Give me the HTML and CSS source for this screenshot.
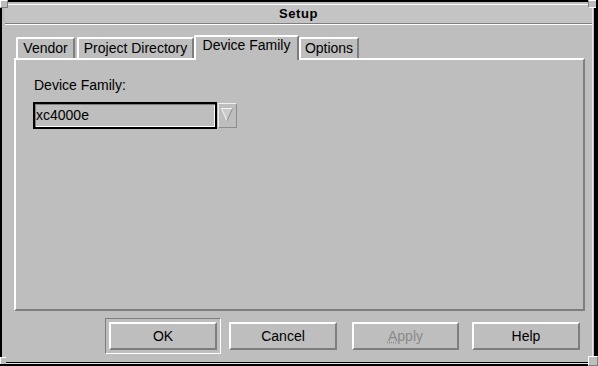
FILE: index.html
```html
<!DOCTYPE html>
<html>
<head>
    <title>Setup</title>
    <link rel="stylesheet" href="styles.css">
</head>
<body>
    <div class="window">
        <span class="corner corner-tl"></span>
        <span class="corner corner-tr"></span>
        <span class="corner corner-bl"></span>
        <span class="corner corner-br"></span>
        <div class="frame">
            <div class="titlebar">Setup</div>

            <div class="notebook">
                <div class="tabs">
                    <div class="tab tab-vendor">Vendor</div>
                    <div class="tab tab-project">Project Directory</div>
                    <div class="tab tab-family active">Device Family</div>
                    <div class="tab tab-options">Options</div>
                </div>
                <div class="panel">
                    <div class="field-label">Device Family:</div>
                    <div class="combo">
                        <div class="combo-text">xc4000e</div>
                        <div class="combo-arrow">
                            <svg width="17" height="23" viewBox="0 0 17 23">
                                <polygon points="2.5,4.5 13.5,4.5 8,17" fill="#cbcbcb"/>
                                <polyline points="13.5,4.5 2.5,4.5 8,17" fill="none" stroke="#f4f4f4" stroke-width="1"/>
                                <line x1="13.5" y1="4.5" x2="8" y2="17" stroke="#8c8c8c" stroke-width="1"/>
                            </svg>
                        </div>
                    </div>
                </div>
            </div>

            <div class="buttons">
                <div class="default-frame"><button class="btn btn-ok">OK</button></div>
                <button class="btn btn-cancel">Cancel</button>
                <button class="btn btn-apply disabled"><u>A</u>pply</button>
                <button class="btn btn-help">Help</button>
            </div>
        </div>
    </div>
</body>
</html>
```

FILE: styles.css
```css
body {
    margin: 0;
    font-family: "Liberation Sans", Arial, sans-serif;
    font-size: 14px;
    color: #000;
    background: #000;
}
.window {
    position: relative;
    width: 598px;
    height: 366px;
    box-sizing: border-box;
    border-style: solid;
    border-color: #000;
    border-width: 2px 4px 4px 2px;
    background: #bebebe;
}
/* resize handles of the window frame */
.corner {
    position: absolute;
    width: 8px;
    height: 8px;
    box-sizing: border-box;
    background: #bebebe;
}
.corner-tl {
    left: -2px;
    top: -2px;
    border-top: 1px solid #fff;
    border-left: 1px solid #fff;
    border-right: 1px solid #7e7e7e;
    border-bottom: 1px solid #7e7e7e;
}
.corner-tr {
    right: -2px;
    top: -2px;
    border-top: 1px solid #fff;
    border-left: 1px solid #7e7e7e;
    border-bottom: 1px solid #fff;
}
.corner-bl {
    left: -2px;
    bottom: -2px;
    width: 6px;
    height: 7px;
    border-left: 1px solid #fff;
    border-top: 1px solid #fff;
}
.corner-br {
    right: -4px;
    bottom: -4px;
    width: 10px;
    height: 10px;
    border-top: 1px solid #fff;
    border-left: 1px solid #fff;
    border-right: 1px solid #7e7e7e;
    border-bottom: 1px solid #7e7e7e;
}
.frame {
    height: 100%;
    box-sizing: border-box;
    margin-right: 1px;
    border-right: 1px solid #e4e4e4;
    border-bottom: 1px solid #e4e4e4;
}
.titlebar {
    margin: 2px 0 0 3px;
    height: 20px;
    box-sizing: border-box;
    border-top: 1px solid #fff;
    border-bottom: 1px solid #7e7e7e;
    box-shadow: 0 1px 0 #fff;
    background: #c4c4c4;
    line-height: 18px;
    text-align: center;
    font-size: 13px;
    font-weight: bold;
    letter-spacing: 0.6px;
}
.notebook {
    margin: 11px 0 0 12px;
    width: 571px;
}
.tabs {
    display: flex;
    align-items: flex-end;
    height: 23px;
    padding-left: 2px;
}
.tab {
    box-sizing: border-box;
    height: 21px;
    border-top: 2px solid #fff;
    border-left: 2px solid #fff;
    border-right: 2px solid #7e7e7e;
    border-top-left-radius: 2px;
    line-height: 19px;
    text-align: center;
    white-space: nowrap;
}
.tab-vendor { width: 59px; }
.tab-project { width: 117px; margin-left: 2px; }
.tab-family { width: 105px; }
.tab-options { width: 60px; }
.tab.active {
    height: 25px;
    line-height: 16px;
    margin-bottom: -2px;
    position: relative;
    z-index: 1;
    background: #bebebe;
}
.panel {
    box-sizing: border-box;
    width: 571px;
    height: 253px;
    border: 2px solid;
    border-color: #fff #7e7e7e #7e7e7e #fff;
    padding: 17px 0 0 17px;
}
.field-label {
    line-height: 16px;
    margin-left: 1px;
}
.combo {
    display: flex;
    align-items: center;
    margin-top: 9px;
}
.combo-text {
    box-sizing: border-box;
    width: 184px;
    height: 27px;
    border: 2px solid #000;
    box-shadow: inset 1px 1px 0 #7e7e7e, inset -1px -1px 0 #fff;
    line-height: 23px;
    padding-left: 1px;
}
.combo-arrow {
    box-sizing: border-box;
    width: 19px;
    height: 25px;
    margin-left: 1px;
    border: 1px solid;
    border-color: #efefef #8c8c8c #8c8c8c #efefef;
}
.combo-arrow svg {
    display: block;
}
.buttons {
    display: flex;
    align-items: center;
    margin-top: 7px;
    padding-left: 103px;
}
.default-frame {
    padding: 3px;
    border: 1px solid;
    border-color: #7e7e7e #fff #fff #7e7e7e;
}
.btn {
    display: block;
    box-sizing: border-box;
    width: 108px;
    height: 28px;
    padding: 0;
    border: 2px solid;
    border-color: #fff #7e7e7e #7e7e7e #fff;
    background: #bebebe;
    font-family: inherit;
    font-size: 14px;
    color: #000;
    text-align: center;
}
.btn-cancel { margin-left: 8px; }
.btn-apply { margin-left: 15px; width: 107px; }
.btn-help { margin-left: 13px; }
.btn.disabled {
    color: #8a8a8a;
}
.btn.disabled u {
    text-decoration-style: dotted;
}
```
